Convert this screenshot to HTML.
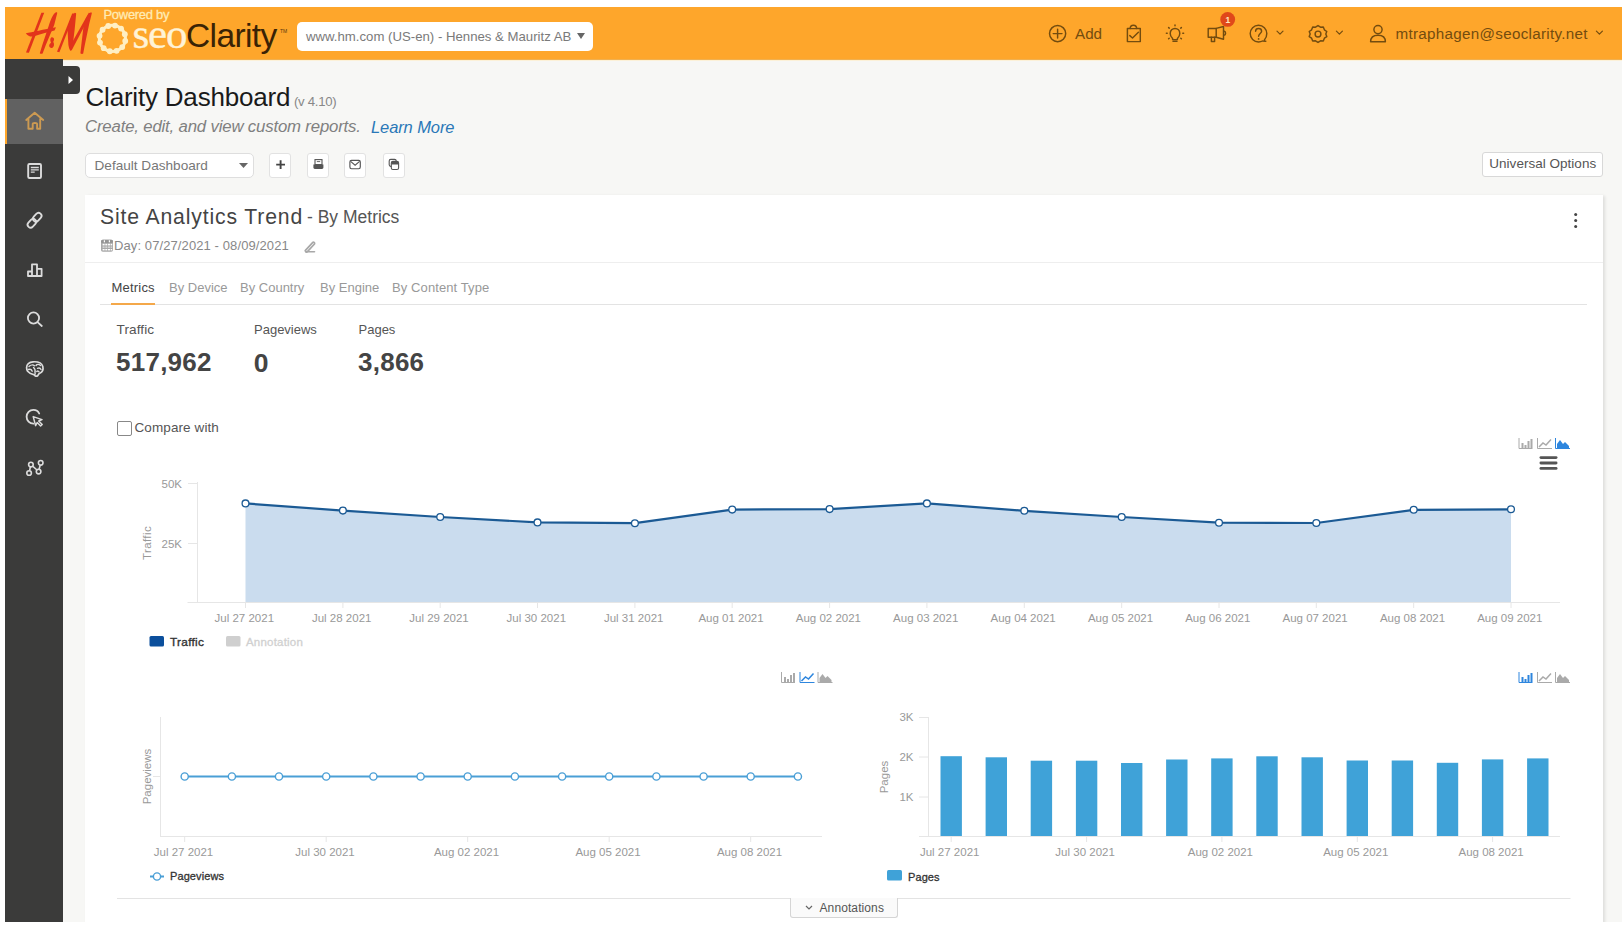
<!DOCTYPE html>
<html><head><meta charset="utf-8"><style>
html,body{margin:0;padding:0;}
body{-webkit-font-smoothing:antialiased;width:1622px;height:927px;position:relative;overflow:hidden;background:#fff;font-family:'Liberation Sans', sans-serif;}
.t{position:absolute;white-space:nowrap;}
svg{overflow:visible}
</style></head><body>
<div style="position:absolute;left:5px;top:7px;width:1617px;height:52px;background:#FEA62B;"></div>
<div style="position:absolute;left:63px;top:59px;width:1559px;height:1px;background:#F0B050;"></div><div style="position:absolute;left:63px;top:60px;width:1559px;height:1px;background:#FCF1D8;"></div>
<svg style="position:absolute;left:0;top:0" width="100" height="60" viewBox="0 0 100 60">
<g fill="#E2341B">
<path d="M41.4,12.7 L44.2,12.7 L28.9,52.8 L26,52.4 Z"/>
<path d="M56,12.3 C56.8,12.2 57.4,12.5 57.2,13.2 L54.2,25 L45.8,45 L42.6,53.4 C42,54 40.2,54 39.8,53.2 L42.3,45 L49,25 C51,19 53,14 56,12.3 Z"/>
<path d="M25.8,33.2 C32,32 44,29.5 55.9,27.2 C55.6,28.5 55,29.5 54.5,30.5 C48,32 42,33.5 34,36.3 C31,37 28,36.5 25.8,33.2 Z"/>
<path d="M51.5,37.3 C53,37 54.5,38.3 54,40 C53.7,41 53,41.5 53.5,42.5 C54.5,44 54,47 52.5,47.8 C51,48.5 49,47.5 49.2,45.5 C49.3,44 50.5,43.5 51,42.5 C50.5,41.5 50,40 50.5,38.5 Z"/>
<path d="M72.2,13.6 L74.6,13.4 L59.4,52.2 L57,51.8 Z"/>
<path d="M74.8,12.8 C76,12.8 76.4,13.5 76.1,14.5 L74.6,30 L72.8,45 C72.5,48 71.8,50 70.8,51 C69.8,50.5 69,48 68.4,45 L67.6,31 C68.2,24 71,16 74.8,12.8 Z"/>
<path d="M69.2,47.5 L88.8,12.7 L91.2,13.2 L71.6,50.5 Z"/>
<path d="M91,12.3 C91.8,12.5 92,13.2 91.6,14.2 L89.2,24 L84.8,45 L83.2,53.6 C82.5,54.2 80.8,54 80.4,53.2 L81.3,45 L83.8,24 C85.5,18.5 88,14 91,12.3 Z"/>
</g></svg>
<div class="t" style="left:103.5px;top:8.40px;font-size:13px;line-height:13px;color:#FFEBB5;font-weight:normal;font-style:normal;letter-spacing:-0.3px;font-family:'Liberation Sans', sans-serif;-webkit-text-stroke:0.3px #FFEBB5;">Powered by</div>
<svg style="position:absolute;left:0;top:0" width="140" height="60"><g fill="#FFEFC4"><circle cx="125.24" cy="41.00" r="2.9"/><circle cx="122.22" cy="47.07" r="2.9"/><circle cx="116.57" cy="50.82" r="2.9"/><circle cx="109.80" cy="51.24" r="2.9"/><circle cx="103.73" cy="48.22" r="2.9"/><circle cx="99.98" cy="42.57" r="2.9"/><circle cx="99.56" cy="35.80" r="2.9"/><circle cx="102.58" cy="29.73" r="2.9"/><circle cx="108.23" cy="25.98" r="2.9"/><circle cx="115.00" cy="25.56" r="2.9"/><circle cx="121.07" cy="28.58" r="2.9"/><circle cx="124.82" cy="34.23" r="2.9"/></g><circle cx="112.4" cy="38.4" r="13.1" fill="none" stroke="#FFEFC4" stroke-width="3"/></svg>
<div class="t" style="left:132.5px;top:11.60px;font-size:43px;line-height:43px;color:#FFF3D6;font-weight:normal;font-style:normal;letter-spacing:-1.2px;font-family:'Liberation Serif', serif;-webkit-text-stroke:0.4px #FFF3D6;">seo</div>
<div class="t" style="left:186px;top:19.14px;font-size:33.5px;line-height:33.5px;color:#3a2305;font-weight:normal;font-style:normal;letter-spacing:-0.6px;font-family:'Liberation Sans', sans-serif;">Clarity</div>
<div class="t" style="left:280px;top:28.77px;font-size:5px;line-height:5px;color:#5a3a10;font-weight:normal;font-style:normal;font-family:'Liberation Sans', sans-serif;">TM</div>
<div style="position:absolute;left:297px;top:22px;width:296px;height:29px;background:#fff;border-radius:5px;"></div>
<div class="t" style="left:306px;top:30.03px;font-size:13.2px;line-height:13.2px;color:#7a7a7a;font-weight:normal;font-style:normal;letter-spacing:0px;font-family:'Liberation Sans', sans-serif;">www.hm.com (US-en) - Hennes &amp; Mauritz AB</div>
<svg style="position:absolute;left:577px;top:33px" width="8" height="6"><path d="M0,0 L8,0 L4,6 Z" fill="#666"/></svg>
<svg style="position:absolute;left:1040px;top:10px" width="582" height="45" viewBox="1040 10 582 45">
<g fill="none" stroke="#734c0f" stroke-width="1.45" stroke-linecap="round" stroke-linejoin="round">
<circle cx="1057.6" cy="33.6" r="8.1"/><path d="M1057.6,29.2 V38 M1053.2,33.6 H1062"/>
<path d="M1130.2,28.4 H1127.4 V41.6 H1140.3 V28.4 H1136.6"/><path d="M1130.2,28.6 C1130.2,24 1136.6,24 1136.6,28.6 Z"/><path d="M1129.8,35.6 L1132.5,38 L1138.4,32.3"/>
<path d="M1172.6,38.6 C1171,37 1170.2,35.4 1170.2,33.4 C1170.2,30.5 1172.4,28.4 1175,28.4 C1177.6,28.4 1179.8,30.5 1179.8,33.4 C1179.8,35.4 1179,37 1177.4,38.6 V39.6 H1172.6 Z"/><path d="M1173,41.3 H1177"/>
</g>
<g fill="none" stroke="#734c0f" stroke-width="1.5" stroke-linecap="round">
<path d="M1175,25 V25.8 M1168.6,27.5 L1169.2,28.1 M1181.4,27.5 L1180.8,28.1 M1166.4,33.2 H1167.2 M1182.8,33.2 H1183.6 M1168.6,38.8 L1169.2,38.2 M1181.4,38.8 L1180.8,38.2"/>
</g>
<g fill="none" stroke="#734c0f" stroke-width="1.45" stroke-linejoin="round" stroke-linecap="round">
<rect x="1208.2" y="28.4" width="8" height="8.8"/><path d="M1216.2,28.4 L1223.5,26.5 V39.3 L1216.2,37.2"/><path d="M1223.8,31 C1226.2,31.5 1226.2,34.8 1223.8,35.3"/><path d="M1211.4,37.3 V41.5 H1214.6 V37.3"/>
<path d="M1264.5,39.8 C1266,38.3 1266.8,36 1266.8,33.6 C1266.8,29 1263.1,25.3 1258.5,25.3 C1253.9,25.3 1250.2,29 1250.2,33.6 C1250.2,38.2 1253.9,41.9 1258.5,41.9 C1260,41.9 1261.5,41.6 1262.5,41 L1265.8,41.3"/>
<path d="M1255.6,31.2 C1255.6,27.6 1261.6,27.6 1261.6,31.2 C1261.6,33.2 1258.6,33.8 1258.6,36.2"/>
</g>
<circle cx="1258.6" cy="38.9" r="0.9" fill="#734c0f"/>
<g fill="none" stroke="#734c0f" stroke-width="1.2" stroke-linecap="round" stroke-linejoin="round">
<path d="M1277,31.2 L1280,34.2 L1283,31.2"/>
<path d="M1336.4,31.2 L1339.4,34.2 L1342.4,31.2"/>
<path d="M1596.4,31.2 L1599.4,34.2 L1602.4,31.2"/>
</g>
<g fill="none" stroke="#734c0f" stroke-width="1.45" stroke-linecap="round" stroke-linejoin="round">
<circle cx="1378" cy="29.6" r="4.1"/><path d="M1370.6,41.8 C1370.6,37 1373.8,35.2 1378,35.2 C1382.2,35.2 1385.4,37 1385.4,41.8 Z"/>
</g>
<g fill="none" stroke="#734c0f" stroke-width="1.45" stroke-linejoin="round">
<path d="M1318,25.6 L1320.5,27.2 L1323.3,27 L1324.4,29.8 L1326.8,31.5 L1325.8,34 L1326.8,36.6 L1324.4,38.2 L1323.3,41 L1320.5,40.8 L1318,42.4 L1315.5,40.8 L1312.7,41 L1311.6,38.2 L1309.2,36.6 L1310.2,34 L1309.2,31.5 L1311.6,29.8 L1312.7,27 L1315.5,27.2 Z"/>
<circle cx="1318" cy="34" r="2.9"/>
</g>
<circle cx="1227.7" cy="19.4" r="7.4" fill="#E0481A"/>
<text x="1227.9" y="22.6" font-family="Liberation Sans" font-size="8.5" font-weight="bold" fill="#FFE9C0" text-anchor="middle">1</text>
</svg>
<div class="t" style="left:1075px;top:26.03px;font-size:15.2px;line-height:15.2px;color:#734c0f;font-weight:normal;font-style:normal;font-family:'Liberation Sans', sans-serif;">Add</div>
<div class="t" style="left:1395.5px;top:25.93px;font-size:15.2px;line-height:15.2px;color:#734c0f;font-weight:normal;font-style:normal;letter-spacing:0.3px;font-family:'Liberation Sans', sans-serif;">mtraphagen@seoclarity.net</div>
<div style="position:absolute;left:5px;top:59px;width:58px;height:863px;background:#3b3b3a;"></div>
<div style="position:absolute;left:5px;top:99px;width:58px;height:45px;background:#616161;"></div>
<div style="position:absolute;left:5px;top:99px;width:2px;height:45px;background:#FEA62B;"></div>
<div style="position:absolute;left:58px;top:66px;width:22px;height:28px;background:#3b3b3a;border-radius:0 4px 4px 0;"></div>
<svg style="position:absolute;left:68px;top:76px" width="6" height="8"><path d="M0.5,0 L5,4 L0.5,8 Z" fill="#fff"/></svg>
<svg style="position:absolute;left:0;top:0" width="64" height="500" viewBox="0 0 64 500">
<g fill="none" stroke="#CC9A52" stroke-width="1.9" stroke-linejoin="round" stroke-linecap="round">
<path d="M26.2,120 L34.7,112.7 L43.2,120 M28.4,118.6 V128.8 H32.7 V124 C32.7,122.6 37.1,122.6 37.1,124 V128.8 H40.2 V118.6"/>
</g>
<g fill="none" stroke="#dcdcdc" stroke-width="1.9" stroke-linecap="round" stroke-linejoin="round">
<rect x="28.2" y="164" width="12.8" height="14" rx="1.3"/>
</g>
<g fill="none" stroke="#dcdcdc" stroke-width="1.3">
<path d="M30.8,167.5 H38.8 M30.8,169.8 H38.8 M30.8,172.1 H34.7"/>
</g>
<g fill="none" stroke="#dcdcdc" stroke-width="1.8">
<g transform="rotate(-48 34.7 220.1)"><rect x="25.6" y="217.1" width="9.8" height="6" rx="3"/><rect x="33.6" y="217.1" width="9.8" height="6" rx="3"/></g>
<path d="M28,276 V271.5 H32 V276 Z M32,276 V264.3 H37 V276 Z M37,276 V268.8 H41.6 V276 Z" stroke-linejoin="round"/>
<circle cx="33.5" cy="318" r="5.6"/><path d="M37.8,322.4 L41.8,326" stroke-linecap="round"/>
<path d="M39.2,413.5 C38,410.8 35.8,409.9 33.4,409.9 C29.6,409.9 26.6,413 26.6,416.8 C26.6,420.6 29.6,423.7 33.4,423.7" stroke-linecap="round"/>
</g>
<path d="M33.2,416.6 L42,419.6 L38.7,421 L42.2,424.5 L40.6,426 L37.2,422.5 L35.6,425.6 Z" fill="none" stroke="#dcdcdc" stroke-width="1.5" stroke-linejoin="round"/>
<path d="M26.6,367.8 C26.4,364.5 29.2,362 33,361.8 C37.5,361.5 41.7,362.8 42.8,366.5 C43.5,369.5 42.2,372.2 39.8,373.2 C38.4,373.8 38.2,375 37.6,375.8 C36.5,376.6 34.8,376.2 34.3,374.8 C31.2,374.2 28.8,372.8 27.6,371.3 C26.9,370.2 26.6,369 26.6,367.8 Z" fill="none" stroke="#dcdcdc" stroke-width="1.7"/>
<g fill="none" stroke="#dcdcdc" stroke-width="1.4" stroke-linecap="round">
<path d="M29,366.5 C30.5,365 33,364.5 34.5,365.8"/><path d="M28.5,369.5 C30,369 31.5,369.5 32.2,371.2"/><path d="M33.5,367.5 C34.8,368.5 35.5,370 35,372.5 L35.2,374"/><path d="M36,365.5 C37,364 39,364 40.5,365.5"/><path d="M37.5,368.3 C38.8,367.8 40.5,368.3 41,369.5"/><path d="M36.8,371.5 C37.5,370.8 38.5,371 39,371.8"/>
</g>
<g fill="none" stroke="#dcdcdc" stroke-width="1.6">
<circle cx="29.1" cy="473" r="2.3"/><circle cx="30.9" cy="464.6" r="2.3"/><circle cx="38.6" cy="471.6" r="2.3"/><circle cx="40.7" cy="462.8" r="2.3"/>
<path d="M29.6,470.7 L30.4,466.9 M32.6,466.2 L37,470 M39.1,469.3 L40.2,465.1"/>
</g></svg>
<div style="position:absolute;left:63px;top:59px;width:1559px;height:863px;background:#f7f7f5;z-index:-1"></div>
<div class="t" style="left:85.5px;top:83.99px;font-size:26px;line-height:26px;color:#1a1a1a;font-weight:normal;font-style:normal;letter-spacing:-0.2px;font-family:'Liberation Sans', sans-serif;">Clarity Dashboard</div>
<div class="t" style="left:294px;top:94.83px;font-size:13.2px;line-height:13.2px;color:#888;font-weight:normal;font-style:normal;letter-spacing:-0.3px;font-family:'Liberation Sans', sans-serif;">(v 4.10)</div>
<div class="t" style="left:85px;top:119.18px;font-size:16.8px;line-height:16.8px;color:#808080;font-weight:normal;font-style:italic;letter-spacing:-0.18px;font-family:'Liberation Sans', sans-serif;">Create, edit, and view custom reports.</div>
<div class="t" style="left:371px;top:119.23px;font-size:16.5px;line-height:16.5px;color:#2a78b8;font-weight:normal;font-style:italic;letter-spacing:-0.1px;font-family:'Liberation Sans', sans-serif;">Learn More</div>
<div style="position:absolute;left:85px;top:152.5px;width:167px;height:23.5px;background:#fff;border:1px solid #dedede;border-radius:5px;"></div>
<div class="t" style="left:94.5px;top:159.49px;font-size:13.6px;line-height:13.6px;color:#777;font-weight:normal;font-style:normal;font-family:'Liberation Sans', sans-serif;">Default Dashboard</div>
<svg style="position:absolute;left:239px;top:163px" width="9" height="6"><path d="M0,0 L9,0 L4.5,5 Z" fill="#666"/></svg>
<div style="position:absolute;left:269px;top:152.5px;width:20px;height:23px;background:#fff;border:1px solid #e2e2e2;border-radius:3px;"></div>
<div style="position:absolute;left:306.5px;top:152.5px;width:20px;height:23px;background:#fff;border:1px solid #e2e2e2;border-radius:3px;"></div>
<div style="position:absolute;left:343.5px;top:152.5px;width:20px;height:23px;background:#fff;border:1px solid #e2e2e2;border-radius:3px;"></div>
<div style="position:absolute;left:382.5px;top:152.5px;width:20px;height:23px;background:#fff;border:1px solid #e2e2e2;border-radius:3px;"></div>
<svg style="position:absolute;left:0;top:0" width="420" height="190" viewBox="0 0 420 190">
<path d="M280.6,160.2 V169 M276.2,164.6 H285" stroke="#444" stroke-width="1.9"/>
<rect x="315" y="159.6" width="7" height="5" fill="#fff" stroke="#555" stroke-width="1.1"/><path d="M316.8,161.6 H320.2" stroke="#555" stroke-width="0.9"/>
<path d="M313.4,164.6 H323.4 V167.6 C323.4,168.5 322.8,169 322,169 H314.8 C314,169 313.4,168.5 313.4,167.6 Z" fill="#555"/>
<rect x="349.9" y="160.4" width="10.4" height="8.3" rx="1.6" fill="none" stroke="#555" stroke-width="1.15"/><path d="M350.6,161.4 L355.1,165.2 L359.6,161.4" fill="none" stroke="#555" stroke-width="1.1"/>
<rect x="389.2" y="159.4" width="7" height="7" rx="1.6" fill="none" stroke="#555" stroke-width="1.1"/><rect x="391.3" y="161.4" width="7.3" height="8.1" rx="1.6" fill="#fff" stroke="#555" stroke-width="1.1"/><path d="M391.3,163 C391.3,162 392,161.4 393,161.4 H397 C398,161.4 398.6,162 398.6,163 V164.4 H391.3 Z" fill="#555"/>
</svg>
<div style="position:absolute;left:1481.5px;top:152px;width:119px;height:23px;background:#fff;border:1px solid #d8d8d8;border-radius:3px;"></div>
<div class="t" style="left:1489.3px;top:157.47px;font-size:13.5px;line-height:13.5px;color:#555;font-weight:normal;font-style:normal;letter-spacing:0.02px;font-family:'Liberation Sans', sans-serif;">Universal Options</div>
<div style="position:absolute;left:85px;top:195px;width:1518px;height:760px;background:#fff;box-shadow:2px 1px 3px rgba(0,0,0,0.10);"></div>
<div class="t" style="left:100px;top:206.35px;font-size:21.2px;line-height:21.2px;color:#444;font-weight:normal;font-style:normal;letter-spacing:0.85px;font-family:'Liberation Sans', sans-serif;">Site Analytics Trend</div>
<div class="t" style="left:307px;top:208.89px;font-size:17.5px;line-height:17.5px;color:#555;font-weight:normal;font-style:normal;font-family:'Liberation Sans', sans-serif;">- By Metrics</div>
<svg style="position:absolute;left:0;top:0" width="330" height="260" viewBox="0 0 330 260">
<rect x="101" y="239.8" width="12" height="12" rx="1.8" fill="#a9a9a9"/><rect x="101" y="239.8" width="12" height="3.2" rx="1.5" fill="#959595"/>
<g fill="#fff"><rect x="102.6" y="243.8" width="2" height="1.6"/><rect x="105.3" y="243.8" width="2" height="1.6"/><rect x="108" y="243.8" width="2" height="1.6"/><rect x="110.6" y="243.8" width="1.6" height="1.6"/>
<rect x="102.6" y="246.4" width="2" height="1.6" opacity="0.5"/><rect x="105.3" y="246.4" width="2" height="1.6" opacity="0.5"/><rect x="108" y="246.4" width="2" height="1.6" opacity="0.5"/><rect x="110.6" y="246.4" width="1.6" height="1.6" opacity="0.5"/>
<rect x="102.6" y="249" width="2" height="1.4"/><rect x="105.3" y="249" width="2" height="1.4"/><rect x="108" y="249" width="2" height="1.4"/><rect x="110.6" y="249" width="1.6" height="1.4"/></g>
<g fill="#fff"><rect x="103.8" y="240.3" width="1.2" height="2"/><rect x="108.8" y="240.3" width="1.2" height="2"/></g>
<path d="M305.2,250.6 L312.6,242.6 C313.5,241.7 315.2,242.9 314.5,244 L307.2,251.8 C306.5,252.4 305.6,252 305.2,250.6 Z" fill="none" stroke="#a8a8a8" stroke-width="1.7" stroke-linejoin="round"/><path d="M306,251.7 H314.5" stroke="#a8a8a8" stroke-width="1.6" stroke-linecap="round"/>
</svg>
<div class="t" style="left:114px;top:239.00px;font-size:13px;line-height:13px;color:#888;font-weight:normal;font-style:normal;letter-spacing:0.1px;font-family:'Liberation Sans', sans-serif;">Day: 07/27/2021 - 08/09/2021</div>
<svg style="position:absolute;left:1572px;top:212px" width="8" height="18"><circle cx="3.7" cy="2.6" r="1.5" fill="#444"/><circle cx="3.7" cy="8.6" r="1.5" fill="#444"/><circle cx="3.7" cy="14.6" r="1.5" fill="#444"/></svg>
<div style="position:absolute;left:85px;top:262px;width:1518px;height:1px;background:#eee;"></div>
<div class="t" style="left:111.5px;top:280.80px;font-size:13px;line-height:13px;color:#444;font-weight:normal;font-style:normal;letter-spacing:0.2px;font-family:'Liberation Sans', sans-serif;">Metrics</div>
<div class="t" style="left:169px;top:280.80px;font-size:13px;line-height:13px;color:#999;font-weight:normal;font-style:normal;font-family:'Liberation Sans', sans-serif;">By Device</div>
<div class="t" style="left:240px;top:280.80px;font-size:13px;line-height:13px;color:#999;font-weight:normal;font-style:normal;font-family:'Liberation Sans', sans-serif;">By Country</div>
<div class="t" style="left:320px;top:280.80px;font-size:13px;line-height:13px;color:#999;font-weight:normal;font-style:normal;font-family:'Liberation Sans', sans-serif;">By Engine</div>
<div class="t" style="left:392px;top:280.80px;font-size:13px;line-height:13px;color:#999;font-weight:normal;font-style:normal;letter-spacing:0.1px;font-family:'Liberation Sans', sans-serif;">By Content Type</div>
<div style="position:absolute;left:100px;top:304px;width:1487px;height:1px;background:#e3e3e3;"></div>
<div style="position:absolute;left:111px;top:302.5px;width:44px;height:2px;background:#F4A84A;"></div>
<div class="t" style="left:116.5px;top:322.79px;font-size:13.6px;line-height:13.6px;color:#555;font-weight:normal;font-style:normal;letter-spacing:0.1px;font-family:'Liberation Sans', sans-serif;">Traffic</div>
<div class="t" style="left:254px;top:323.00px;font-size:13px;line-height:13px;color:#555;font-weight:normal;font-style:normal;font-family:'Liberation Sans', sans-serif;">Pageviews</div>
<div class="t" style="left:358.5px;top:323.00px;font-size:13px;line-height:13px;color:#555;font-weight:normal;font-style:normal;font-family:'Liberation Sans', sans-serif;">Pages</div>
<div class="t" style="left:116px;top:348.99px;font-size:26px;line-height:26px;color:#444;font-weight:bold;font-style:normal;letter-spacing:0.25px;font-family:'Liberation Sans', sans-serif;">517,962</div>
<div class="t" style="left:253.8px;top:349.57px;font-size:26.5px;line-height:26.5px;color:#444;font-weight:bold;font-style:normal;font-family:'Liberation Sans', sans-serif;">0</div>
<div class="t" style="left:358px;top:348.99px;font-size:26px;line-height:26px;color:#444;font-weight:bold;font-style:normal;letter-spacing:0.25px;font-family:'Liberation Sans', sans-serif;">3,866</div>
<div style="position:absolute;left:117px;top:421px;width:13px;height:13px;border:1px solid #888;border-radius:2px;background:#fff;"></div>
<div class="t" style="left:134.5px;top:420.57px;font-size:13.5px;line-height:13.5px;color:#555;font-weight:normal;font-style:normal;letter-spacing:0.1px;font-family:'Liberation Sans', sans-serif;">Compare with</div>
<svg style="position:absolute;left:0;top:0" width="1622" height="927" viewBox="0 0 1622 927"><path d="M197.5,482 V602" stroke="#e6e6e6" stroke-width="1"/><path d="M187.5,602.5 H1560" stroke="#e6e6e6" stroke-width="1"/><path d="M188,483.5 H197 M188,543.5 H197" stroke="#e6e6e6" stroke-width="1"/><path d="M245.5,602 L245.5,503.4 L342.9,510.6 L440.2,517.0 L537.5,522.4 L634.9,523.2 L732.2,509.6 L829.6,509.1 L926.9,503.4 L1024.3,510.8 L1121.7,517.0 L1219.0,522.7 L1316.3,523.0 L1413.7,509.8 L1511.0,509.3 L1511.0,602 Z" fill="#CADCEE"/><polyline points="245.5,503.4 342.9,510.6 440.2,517.0 537.5,522.4 634.9,523.2 732.2,509.6 829.6,509.1 926.9,503.4 1024.3,510.8 1121.7,517.0 1219.0,522.7 1316.3,523.0 1413.7,509.8 1511.0,509.3" fill="none" stroke="#1B5A94" stroke-width="2.2" stroke-linejoin="round"/><circle cx="245.5" cy="503.4" r="3.4" fill="#fff" stroke="#1B5A94" stroke-width="1.3"/><circle cx="342.9" cy="510.6" r="3.4" fill="#fff" stroke="#1B5A94" stroke-width="1.3"/><circle cx="440.2" cy="517.0" r="3.4" fill="#fff" stroke="#1B5A94" stroke-width="1.3"/><circle cx="537.5" cy="522.4" r="3.4" fill="#fff" stroke="#1B5A94" stroke-width="1.3"/><circle cx="634.9" cy="523.2" r="3.4" fill="#fff" stroke="#1B5A94" stroke-width="1.3"/><circle cx="732.2" cy="509.6" r="3.4" fill="#fff" stroke="#1B5A94" stroke-width="1.3"/><circle cx="829.6" cy="509.1" r="3.4" fill="#fff" stroke="#1B5A94" stroke-width="1.3"/><circle cx="926.9" cy="503.4" r="3.4" fill="#fff" stroke="#1B5A94" stroke-width="1.3"/><circle cx="1024.3" cy="510.8" r="3.4" fill="#fff" stroke="#1B5A94" stroke-width="1.3"/><circle cx="1121.7" cy="517.0" r="3.4" fill="#fff" stroke="#1B5A94" stroke-width="1.3"/><circle cx="1219.0" cy="522.7" r="3.4" fill="#fff" stroke="#1B5A94" stroke-width="1.3"/><circle cx="1316.3" cy="523.0" r="3.4" fill="#fff" stroke="#1B5A94" stroke-width="1.3"/><circle cx="1413.7" cy="509.8" r="3.4" fill="#fff" stroke="#1B5A94" stroke-width="1.3"/><circle cx="1511.0" cy="509.3" r="3.4" fill="#fff" stroke="#1B5A94" stroke-width="1.3"/><path d="M245.5,602 V608" stroke="#e6e6e6"/><text x="244.3" y="622" text-anchor="middle" font-family="Liberation Sans" font-size="11.5" fill="#999">Jul 27 2021</text><path d="M342.9,602 V608" stroke="#e6e6e6"/><text x="341.7" y="622" text-anchor="middle" font-family="Liberation Sans" font-size="11.5" fill="#999">Jul 28 2021</text><path d="M440.2,602 V608" stroke="#e6e6e6"/><text x="439.0" y="622" text-anchor="middle" font-family="Liberation Sans" font-size="11.5" fill="#999">Jul 29 2021</text><path d="M537.5,602 V608" stroke="#e6e6e6"/><text x="536.3" y="622" text-anchor="middle" font-family="Liberation Sans" font-size="11.5" fill="#999">Jul 30 2021</text><path d="M634.9,602 V608" stroke="#e6e6e6"/><text x="633.7" y="622" text-anchor="middle" font-family="Liberation Sans" font-size="11.5" fill="#999">Jul 31 2021</text><path d="M732.2,602 V608" stroke="#e6e6e6"/><text x="731.0" y="622" text-anchor="middle" font-family="Liberation Sans" font-size="11.5" fill="#999">Aug 01 2021</text><path d="M829.6,602 V608" stroke="#e6e6e6"/><text x="828.4" y="622" text-anchor="middle" font-family="Liberation Sans" font-size="11.5" fill="#999">Aug 02 2021</text><path d="M926.9,602 V608" stroke="#e6e6e6"/><text x="925.7" y="622" text-anchor="middle" font-family="Liberation Sans" font-size="11.5" fill="#999">Aug 03 2021</text><path d="M1024.3,602 V608" stroke="#e6e6e6"/><text x="1023.1" y="622" text-anchor="middle" font-family="Liberation Sans" font-size="11.5" fill="#999">Aug 04 2021</text><path d="M1121.7,602 V608" stroke="#e6e6e6"/><text x="1120.5" y="622" text-anchor="middle" font-family="Liberation Sans" font-size="11.5" fill="#999">Aug 05 2021</text><path d="M1219.0,602 V608" stroke="#e6e6e6"/><text x="1217.8" y="622" text-anchor="middle" font-family="Liberation Sans" font-size="11.5" fill="#999">Aug 06 2021</text><path d="M1316.3,602 V608" stroke="#e6e6e6"/><text x="1315.1" y="622" text-anchor="middle" font-family="Liberation Sans" font-size="11.5" fill="#999">Aug 07 2021</text><path d="M1413.7,602 V608" stroke="#e6e6e6"/><text x="1412.5" y="622" text-anchor="middle" font-family="Liberation Sans" font-size="11.5" fill="#999">Aug 08 2021</text><path d="M1511.0,602 V608" stroke="#e6e6e6"/><text x="1509.8" y="622" text-anchor="middle" font-family="Liberation Sans" font-size="11.5" fill="#999">Aug 09 2021</text><text x="182" y="487.5" text-anchor="end" font-family="Liberation Sans" font-size="11.5" fill="#999">50K</text><text x="182" y="547.5" text-anchor="end" font-family="Liberation Sans" font-size="11.5" fill="#999">25K</text><text transform="translate(150.5,543) rotate(-90)" text-anchor="middle" font-family="Liberation Sans" font-size="11.5" fill="#999" letter-spacing="0.4">Traffic</text><rect x="149.5" y="636" width="14.5" height="10.5" rx="1.5" fill="#0B4F9C"/><text x="170" y="645.7" font-family="Liberation Sans" font-size="11.8" fill="#333" stroke="#333" stroke-width="0.35" letter-spacing="0.3">Traffic</text><rect x="226" y="636" width="14.5" height="10.5" rx="1.5" fill="#cfcfcf"/><text x="246" y="645.7" font-family="Liberation Sans" font-size="11.5" fill="#d0d0d0" stroke="#d0d0d0" stroke-width="0.3" letter-spacing="0.2">Annotation</text><g stroke="#aaa" stroke-width="1" fill="none"><path d="M1519.0,438 V448.5 H1532.5"/></g><g fill="#aaa"><rect x="1521.5" y="443" width="2" height="5"/><rect x="1524.5" y="445" width="2" height="3"/><rect x="1527.5" y="441" width="2" height="7"/><rect x="1530.5" y="439" width="2" height="9"/></g><g stroke="#aaa" stroke-width="1" fill="none"><path d="M1537.5,438 V448.5 H1552.0"/><path d="M1539.0,447 L1543.0,443 L1546.0,445 L1551.0,439.5" stroke-width="1.5"/></g><g stroke="#2E86DE" stroke-width="1" fill="none"><path d="M1555.5,438 V448.5 H1570.0"/></g><path d="M1557.0,448 L1557.0,444 L1560.0,440 L1563.0,444 L1565.0,442 L1569.0,446 V448 Z" fill="#2E86DE"/><g fill="#555"><rect x="1539.5" y="456.2" width="18" height="2.8" rx="1.4"/><rect x="1539.5" y="461.6" width="18" height="2.8" rx="1.4"/><rect x="1539.5" y="467" width="18" height="2.8" rx="1.4"/></g><g stroke="#aaa" stroke-width="1" fill="none"><path d="M781.5,672 V682.5 H795"/></g><g fill="#aaa"><rect x="784" y="677" width="2" height="5"/><rect x="787" y="679" width="2" height="3"/><rect x="790" y="675" width="2" height="7"/><rect x="793" y="673" width="2" height="9"/></g><g stroke="#2E86DE" stroke-width="1" fill="none"><path d="M800.0,672 V682.5 H814.5"/><path d="M801.5,681 L805.5,677 L808.5,679 L813.5,673.5" stroke-width="1.5"/></g><g stroke="#aaa" stroke-width="1" fill="none"><path d="M818.0,672 V682.5 H832.5"/></g><path d="M819.5,682 L819.5,678 L822.5,674 L825.5,678 L827.5,676 L831.5,680 V682 Z" fill="#aaa"/><g stroke="#2E86DE" stroke-width="1" fill="none"><path d="M1519.0,672 V682.5 H1532.5"/></g><g fill="#2E86DE"><rect x="1521.5" y="677" width="2" height="5"/><rect x="1524.5" y="679" width="2" height="3"/><rect x="1527.5" y="675" width="2" height="7"/><rect x="1530.5" y="673" width="2" height="9"/></g><g stroke="#aaa" stroke-width="1" fill="none"><path d="M1537.5,672 V682.5 H1552.0"/><path d="M1539.0,681 L1543.0,677 L1546.0,679 L1551.0,673.5" stroke-width="1.5"/></g><g stroke="#aaa" stroke-width="1" fill="none"><path d="M1555.5,672 V682.5 H1570.0"/></g><path d="M1557.0,682 L1557.0,678 L1560.0,674 L1563.0,678 L1565.0,676 L1569.0,680 V682 Z" fill="#aaa"/><path d="M160.5,717 V836" stroke="#e6e6e6"/><path d="M160,836.5 H822" stroke="#e6e6e6"/><path d="M153,776.5 H160" stroke="#e6e6e6"/><path d="M184.7,776.5 H797.9" stroke="#4A9FD6" stroke-width="2.2"/><circle cx="184.7" cy="776.5" r="3.6" fill="#fff" stroke="#4A9FD6" stroke-width="1.4"/><circle cx="231.9" cy="776.5" r="3.6" fill="#fff" stroke="#4A9FD6" stroke-width="1.4"/><circle cx="279.0" cy="776.5" r="3.6" fill="#fff" stroke="#4A9FD6" stroke-width="1.4"/><circle cx="326.2" cy="776.5" r="3.6" fill="#fff" stroke="#4A9FD6" stroke-width="1.4"/><circle cx="373.4" cy="776.5" r="3.6" fill="#fff" stroke="#4A9FD6" stroke-width="1.4"/><circle cx="420.6" cy="776.5" r="3.6" fill="#fff" stroke="#4A9FD6" stroke-width="1.4"/><circle cx="467.7" cy="776.5" r="3.6" fill="#fff" stroke="#4A9FD6" stroke-width="1.4"/><circle cx="514.9" cy="776.5" r="3.6" fill="#fff" stroke="#4A9FD6" stroke-width="1.4"/><circle cx="562.1" cy="776.5" r="3.6" fill="#fff" stroke="#4A9FD6" stroke-width="1.4"/><circle cx="609.2" cy="776.5" r="3.6" fill="#fff" stroke="#4A9FD6" stroke-width="1.4"/><circle cx="656.4" cy="776.5" r="3.6" fill="#fff" stroke="#4A9FD6" stroke-width="1.4"/><circle cx="703.6" cy="776.5" r="3.6" fill="#fff" stroke="#4A9FD6" stroke-width="1.4"/><circle cx="750.7" cy="776.5" r="3.6" fill="#fff" stroke="#4A9FD6" stroke-width="1.4"/><circle cx="797.9" cy="776.5" r="3.6" fill="#fff" stroke="#4A9FD6" stroke-width="1.4"/><path d="M184.7,836 V842" stroke="#e6e6e6"/><text x="183.5" y="856" text-anchor="middle" font-family="Liberation Sans" font-size="11.5" fill="#999">Jul 27 2021</text><path d="M326.2,836 V842" stroke="#e6e6e6"/><text x="325.0" y="856" text-anchor="middle" font-family="Liberation Sans" font-size="11.5" fill="#999">Jul 30 2021</text><path d="M467.7,836 V842" stroke="#e6e6e6"/><text x="466.5" y="856" text-anchor="middle" font-family="Liberation Sans" font-size="11.5" fill="#999">Aug 02 2021</text><path d="M609.2,836 V842" stroke="#e6e6e6"/><text x="608.0" y="856" text-anchor="middle" font-family="Liberation Sans" font-size="11.5" fill="#999">Aug 05 2021</text><path d="M750.7,836 V842" stroke="#e6e6e6"/><text x="749.5" y="856" text-anchor="middle" font-family="Liberation Sans" font-size="11.5" fill="#999">Aug 08 2021</text><text transform="translate(150.5,776.5) rotate(-90)" text-anchor="middle" font-family="Liberation Sans" font-size="11.5" fill="#999">Pageviews</text><path d="M150,876.5 H164" stroke="#4A9FD6" stroke-width="2"/><circle cx="157" cy="876.5" r="3.6" fill="#fff" stroke="#4A9FD6" stroke-width="1.4"/><text x="170" y="880" font-family="Liberation Sans" font-size="11" fill="#333" stroke="#333" stroke-width="0.3" letter-spacing="0.1">Pageviews</text><path d="M928.5,717 V836" stroke="#e6e6e6"/><path d="M919,836.5 H1560" stroke="#e6e6e6"/><path d="M919,717.5 H928 M919,757 H928 M919,797 H928" stroke="#e6e6e6"/><text x="913.5" y="721" text-anchor="end" font-family="Liberation Sans" font-size="11.5" fill="#999">3K</text><text x="913.5" y="761" text-anchor="end" font-family="Liberation Sans" font-size="11.5" fill="#999">2K</text><text x="913.5" y="801" text-anchor="end" font-family="Liberation Sans" font-size="11.5" fill="#999">1K</text><rect x="940.5" y="756.2" width="21.4" height="79.8" fill="#3FA2D8"/><rect x="985.6" y="757.3" width="21.4" height="78.7" fill="#3FA2D8"/><rect x="1030.7" y="760.7" width="21.4" height="75.3" fill="#3FA2D8"/><rect x="1075.9" y="760.7" width="21.4" height="75.3" fill="#3FA2D8"/><rect x="1121.0" y="763" width="21.4" height="73.0" fill="#3FA2D8"/><rect x="1166.1" y="759.5" width="21.4" height="76.5" fill="#3FA2D8"/><rect x="1211.2" y="758.4" width="21.4" height="77.6" fill="#3FA2D8"/><rect x="1256.3" y="756.3" width="21.4" height="79.7" fill="#3FA2D8"/><rect x="1301.5" y="757.3" width="21.4" height="78.7" fill="#3FA2D8"/><rect x="1346.6" y="760.5" width="21.4" height="75.5" fill="#3FA2D8"/><rect x="1391.7" y="760.5" width="21.4" height="75.5" fill="#3FA2D8"/><rect x="1436.8" y="762.8" width="21.4" height="73.2" fill="#3FA2D8"/><rect x="1481.9" y="759.4" width="21.4" height="76.6" fill="#3FA2D8"/><rect x="1527.1" y="758.4" width="21.4" height="77.6" fill="#3FA2D8"/><path d="M951.2,836 V842" stroke="#e6e6e6"/><text x="949.7" y="856" text-anchor="middle" font-family="Liberation Sans" font-size="11.5" fill="#999">Jul 27 2021</text><path d="M1086.6,836 V842" stroke="#e6e6e6"/><text x="1085.1" y="856" text-anchor="middle" font-family="Liberation Sans" font-size="11.5" fill="#999">Jul 30 2021</text><path d="M1221.9,836 V842" stroke="#e6e6e6"/><text x="1220.4" y="856" text-anchor="middle" font-family="Liberation Sans" font-size="11.5" fill="#999">Aug 02 2021</text><path d="M1357.3,836 V842" stroke="#e6e6e6"/><text x="1355.8" y="856" text-anchor="middle" font-family="Liberation Sans" font-size="11.5" fill="#999">Aug 05 2021</text><path d="M1492.6,836 V842" stroke="#e6e6e6"/><text x="1491.1" y="856" text-anchor="middle" font-family="Liberation Sans" font-size="11.5" fill="#999">Aug 08 2021</text><text transform="translate(888,777) rotate(-90)" text-anchor="middle" font-family="Liberation Sans" font-size="11.5" fill="#999">Pages</text><rect x="887" y="870" width="15" height="10.5" rx="1.5" fill="#3FA2D8"/><text x="908" y="880.5" font-family="Liberation Sans" font-size="11" fill="#333" stroke="#333" stroke-width="0.3" letter-spacing="0.1">Pages</text><path d="M117,898.5 H1570.5" stroke="#e3e3e3"/></svg>
<div style="position:absolute;left:790px;top:898px;width:106px;height:19px;background:#fafafa;border:1px solid #d5d5d5;border-top:none;border-radius:0 0 3px 3px;"></div>
<svg style="position:absolute;left:805px;top:905px" width="8" height="6"><path d="M1,1 L4,4 L7,1" fill="none" stroke="#666" stroke-width="1.2"/></svg>
<div class="t" style="left:819.5px;top:902.34px;font-size:12px;line-height:12px;color:#555;font-weight:normal;font-style:normal;letter-spacing:0.1px;font-family:'Liberation Sans', sans-serif;">Annotations</div>
<div style="position:absolute;left:0;top:922px;width:1622px;height:5px;background:#fff;"></div>
</body></html>
